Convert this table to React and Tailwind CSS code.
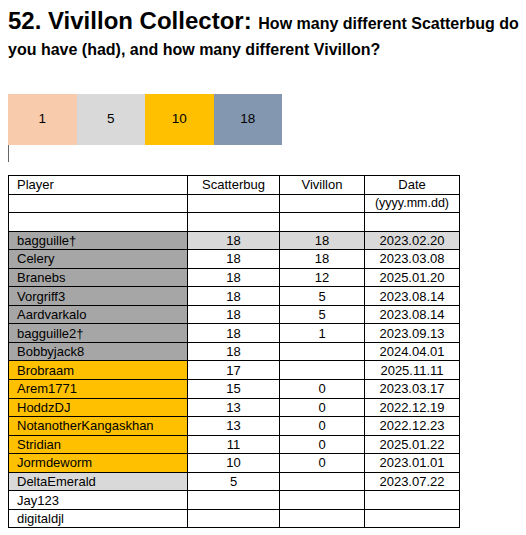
import React from 'react';

const legend = [
  { label: '1', bg: 'bg-[#f8cbad]' },
  { label: '5', bg: 'bg-[#d9d9d9]' },
  { label: '10', bg: 'bg-[#ffc000]' },
  { label: '18', bg: 'bg-[#8497b0]' },
];

const players = [
  { name: 'bagguille†', sb: '18', viv: '18', date: '2023.02.20', nameBg: 'bg-[#a6a6a6]', rowBg: 'bg-[#d9d9d9]' },
  { name: 'Celery', sb: '18', viv: '18', date: '2023.03.08', nameBg: 'bg-[#a6a6a6]' },
  { name: 'Branebs', sb: '18', viv: '12', date: '2025.01.20', nameBg: 'bg-[#a6a6a6]' },
  { name: 'Vorgriff3', sb: '18', viv: '5', date: '2023.08.14', nameBg: 'bg-[#a6a6a6]' },
  { name: 'Aardvarkalo', sb: '18', viv: '5', date: '2023.08.14', nameBg: 'bg-[#a6a6a6]' },
  { name: 'bagguille2†', sb: '18', viv: '1', date: '2023.09.13', nameBg: 'bg-[#a6a6a6]' },
  { name: 'Bobbyjack8', sb: '18', viv: '', date: '2024.04.01', nameBg: 'bg-[#a6a6a6]' },
  { name: 'Brobraam', sb: '17', viv: '', date: '2025.11.11', nameBg: 'bg-[#ffc000]' },
  { name: 'Arem1771', sb: '15', viv: '0', date: '2023.03.17', nameBg: 'bg-[#ffc000]' },
  { name: 'HoddzDJ', sb: '13', viv: '0', date: '2022.12.19', nameBg: 'bg-[#ffc000]' },
  { name: 'NotanotherKangaskhan', sb: '13', viv: '0', date: '2022.12.23', nameBg: 'bg-[#ffc000]' },
  { name: 'Stridian', sb: '11', viv: '0', date: '2025.01.22', nameBg: 'bg-[#ffc000]' },
  { name: 'Jormdeworm', sb: '10', viv: '0', date: '2023.01.01', nameBg: 'bg-[#ffc000]' },
  { name: 'DeltaEmerald', sb: '5', viv: '', date: '2023.07.22', nameBg: 'bg-[#d9d9d9]' },
  { name: 'Jay123', sb: '', viv: '', date: '' },
  { name: 'digitaldjl', sb: '', viv: '', date: '' },
];

const cell = 'border border-black h-[18.55px] p-0 leading-none';

export default function App() {
  return (
    <div className="w-[526px] h-[535px] bg-white text-black overflow-hidden font-['Liberation_Sans',Arial,sans-serif]">
      <h1 className="pl-2 pt-[8px] font-bold leading-[26px]">
        <span className="text-[24px]">52. Vivillon Collector: </span>
        <span className="text-[16px]">How many different Scatterbug do you have (had), and how many different Vivillon?</span>
      </h1>

      <div className="mt-[31px] ml-2 flex">
        {legend.map((l) => (
          <div key={l.label} className={`w-[68.5px] h-[51px] flex items-center justify-center text-[13.5px] ${l.bg}`}>
            {l.label}
          </div>
        ))}
      </div>
      <div className="ml-2 w-px h-[17px] bg-[#666]" />

      <table className="ml-2 mt-[13px] border-collapse text-[13px] table-fixed">
        <colgroup>
          <col className="w-[179px]" />
          <col className="w-[92px]" />
          <col className="w-[85px]" />
          <col className="w-[95px]" />
        </colgroup>
        <tbody>
          <tr>
            <td className={`${cell} pl-2`}>Player</td>
            <td className={`${cell} text-center`}>Scatterbug</td>
            <td className={`${cell} text-center`}>Vivillon</td>
            <td className={`${cell} text-center`}>Date</td>
          </tr>
          <tr>
            <td className={cell}></td>
            <td className={cell}></td>
            <td className={cell}></td>
            <td className={`${cell} text-center text-[12.5px]`}>(yyyy.mm.dd)</td>
          </tr>
          <tr>
            <td className={cell}></td>
            <td className={cell}></td>
            <td className={cell}></td>
            <td className={cell}></td>
          </tr>
          {players.map((p) => (
            <tr key={p.name} className={p.rowBg || ''}>
              <td className={`${cell} pl-2 ${p.nameBg || ''}`}>{p.name}</td>
              <td className={`${cell} text-center`}>{p.sb}</td>
              <td className={`${cell} text-center`}>{p.viv}</td>
              <td className={`${cell} text-center`}>{p.date}</td>
            </tr>
          ))}
        </tbody>
      </table>
    </div>
  );
}
